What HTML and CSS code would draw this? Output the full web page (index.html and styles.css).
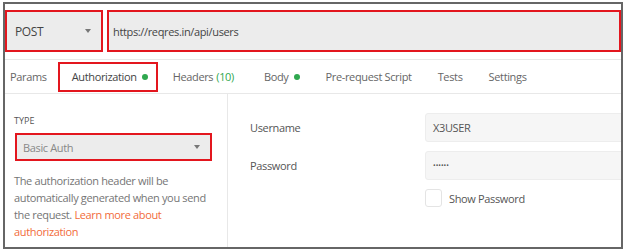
FILE: index.html
```html
<!DOCTYPE html>
<html lang="en">
<head>
  <meta charset="UTF-8" />
  <title>Authorization - Basic Auth</title>
  <link rel="stylesheet" href="styles.css">
</head>
<body>

  <div class="frame">
    <div class="request-bar">
      <div class="method mark">POST <span class="caret"></span></div>
      <div class="url mark">https://reqres.in/api/users</div>
    </div>

    <div class="tabs">
      <div class="tab tab-params">Params</div>
      <div class="tab tab-active mark">Authorization <span class="dot"></span></div>
      <div class="tab tab-headers">Headers <span class="count">(10)</span></div>
      <div class="tab tab-body">Body <span class="dot"></span></div>
      <div class="tab">Pre-request Script</div>
      <div class="tab">Tests</div>
      <div class="tab">Settings</div>
    </div>

    <div class="auth">
      <div class="auth-type">
        <div class="type-label">TYPE</div>
        <div class="select mark">Basic Auth <span class="caret"></span></div>
        <p class="help">
          The authorization header will be automatically generated when you send the request.
          <a href="#">Learn more about authorization</a>
        </p>
      </div>

      <div class="auth-fields">
        <div class="field">
          <label>Username</label>
          <div class="input">X3USER</div>
        </div>
        <div class="field">
          <label>Password</label>
          <div class="input input-secret">&bull;&bull;&bull;&bull;&bull;&bull;</div>
        </div>
        <div class="field">
          <label></label>
          <div class="check"><span class="box"></span> Show Password</div>
        </div>
      </div>
    </div>
  </div>

</body>
</html>
```

FILE: styles.css
```css
* {
  box-sizing: border-box;
}

body {
  margin: 0;
  background: #ffffff;
  font-family: 'Open Sans', 'Noto Sans', sans-serif;
  font-size: 11px;
  letter-spacing: -0.35px;
  color: #555;
}

.frame {
  margin: 2px 0 0 3px;
  width: 620px;
  height: 247px;
  border: 2px solid #666;
  overflow: hidden;
}

/* red annotation boxes */
.mark {
  border: 2px solid #e3161e;
}

.caret {
  display: inline-block;
  width: 0;
  height: 0;
  border-left: 3px solid transparent;
  border-right: 3px solid transparent;
  border-top: 4px solid #777;
}

.request-bar {
  display: flex;
  gap: 4px;
  height: 56px;
  padding-top: 6px;
  border-bottom: 1px solid #e8e8e8;
}

.method {
  display: flex;
  align-items: center;
  justify-content: space-between;
  width: 98px;
  height: 42px;
  padding: 0 10px 0 8px;
  background: #ececec;
  font-size: 12px;
  color: #444;
}

.url {
  flex: 1;
  display: flex;
  align-items: center;
  height: 42px;
  padding-left: 4px;
  background: #ececec;
  color: #444;
}

.tabs {
  display: flex;
  align-items: center;
  height: 34px;
  border-bottom: 1px solid #e8e8e8;
}

.tab {
  flex-shrink: 0;
  display: flex;
  align-items: center;
  gap: 5px;
  height: 30px;
  padding: 0 13px;
  color: #666;
}

.tab-params {
  padding: 0 11px 0 5px;
}

.tab-active {
  width: 100px;
  padding: 0 6px 0 12px;
  color: #444;
}

.tab-headers {
  padding: 0 15px;
}

.tab-body {
  padding: 0 13px 0 15px;
}

.dot {
  flex-shrink: 0;
  width: 6px;
  height: 6px;
  border-radius: 50%;
  background: #2fa84f;
}

.count {
  color: #2fa84f;
  margin-left: -2px;
}

.auth {
  display: flex;
  height: 154px;
}

.auth-type {
  flex-shrink: 0;
  width: 223px;
  padding: 20px 0 0 9px;
  border-right: 1px solid #e8e8e8;
}

.type-label {
  font-size: 9px;
  letter-spacing: 0;
  color: #555;
  margin-bottom: 6px;
}

.select {
  display: flex;
  align-items: center;
  justify-content: space-between;
  width: 197px;
  height: 28px;
  margin-left: 1px;
  padding: 0 10px 0 6px;
  background: #ececec;
  color: #888;
}

.help {
  width: 205px;
  margin: 11px 0 0;
  line-height: 17px;
  color: #757575;
}

.help a {
  color: #f26b3a;
  text-decoration: none;
}

.auth-fields {
  flex: 1;
  padding: 19px 0 0 22px;
}

.field {
  display: flex;
  align-items: center;
  margin-bottom: 9px;
}

.field label {
  flex-shrink: 0;
  width: 175px;
  color: #555;
}

.input {
  flex-shrink: 0;
  display: flex;
  align-items: center;
  width: 220px;
  height: 29px;
  padding-left: 7px;
  background: #f6f6f6;
  border: 1px solid #ededed;
  border-radius: 3px;
  color: #555;
}

.input-secret {
  font-size: 7px;
  letter-spacing: 0;
}

.check {
  display: flex;
  align-items: center;
  gap: 7px;
  color: #555;
}

.box {
  width: 17px;
  height: 18px;
  border: 1px solid #e4e4e4;
  border-radius: 3px;
  background: #fff;
}
```
